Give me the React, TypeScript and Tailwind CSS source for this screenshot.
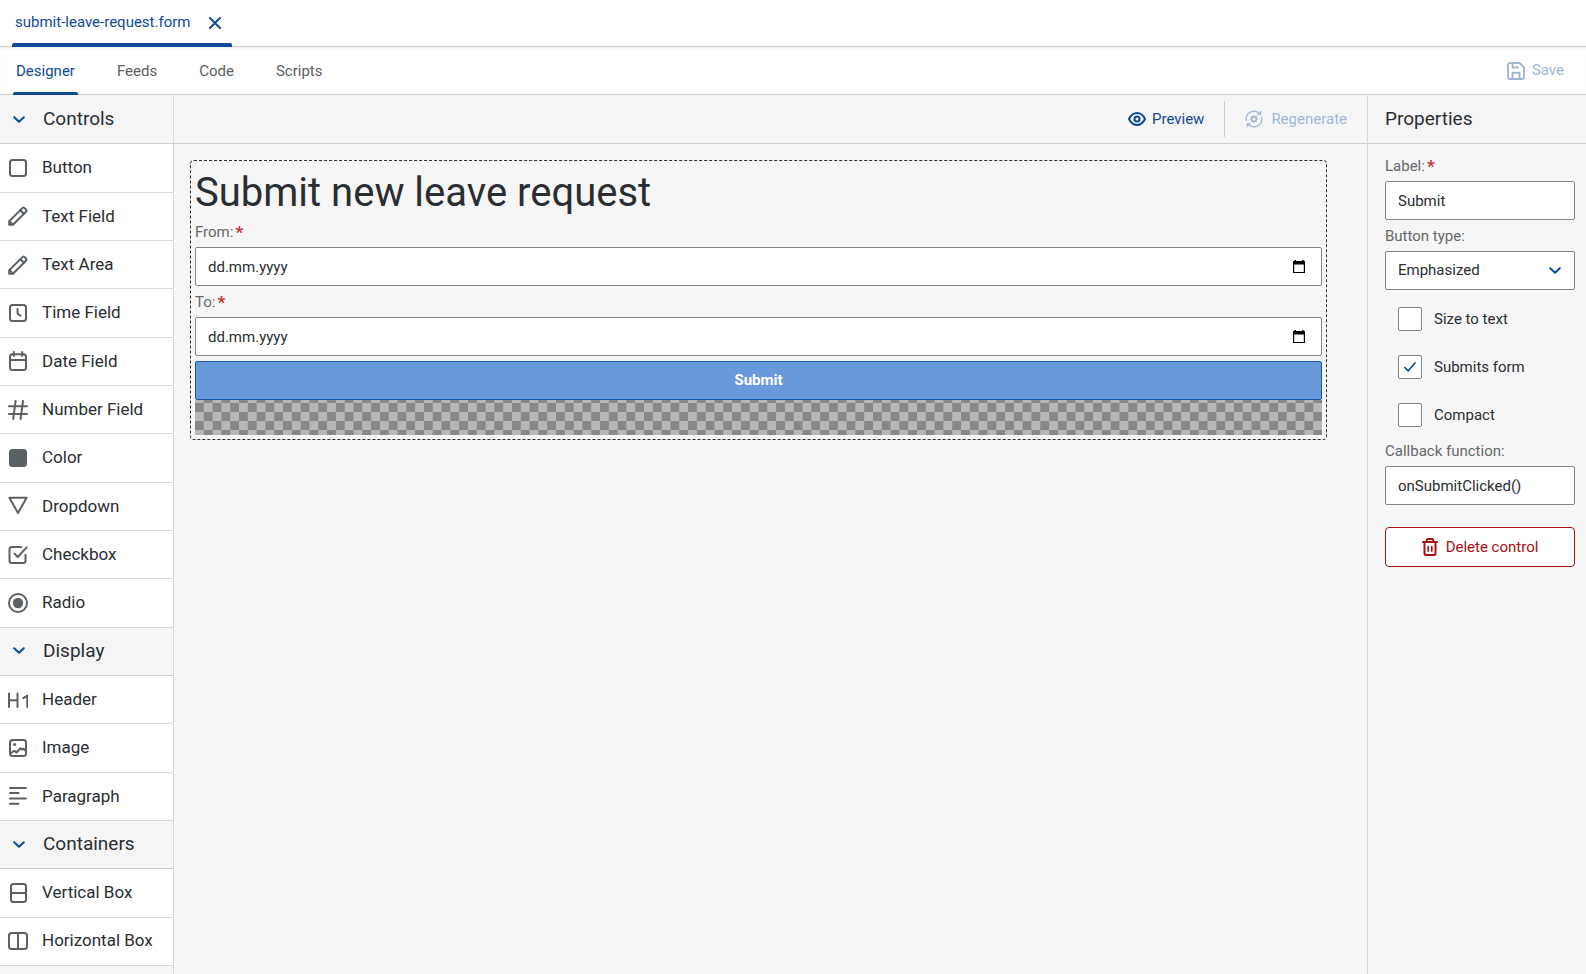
import React, { useState } from "react";

const stroke = {
  fill: "none",
  stroke: "currentColor",
  strokeWidth: 2,
  strokeLinecap: "round",
  strokeLinejoin: "round",
} as const;

function Icon({ children, className = "size-5" }: { children: React.ReactNode; className?: string }) {
  return (
    <svg viewBox="0 0 20 20" className={`shrink-0 ${className}`} aria-hidden="true" {...stroke}>
      {children}
    </svg>
  );
}

function Chevron({ className = "" }: { className?: string }) {
  return (
    <svg viewBox="0 0 12 8" className={`h-2 w-3 shrink-0 ${className}`} aria-hidden="true" {...stroke}>
      <path d="M1.2 1.2 6 5.7l4.8-4.5" />
    </svg>
  );
}

const pencil = (
  <>
    <path d="M1.2 18.8v-3.6L14.6 1.9a1.2 1.2 0 0 1 1.7 0l1.9 1.9a1.2 1.2 0 0 1 0 1.7L4.9 18.8Z" />
    <path d="m12.4 4.2 3.5 3.5M1.8 15.5l2.7 2.7" />
  </>
);

type Entry = { name: string; icon: React.ReactNode };

const sections: { title: string; items: Entry[] }[] = [
  {
    title: "Controls",
    items: [
      { name: "Button", icon: <rect x="2" y="2" width="16" height="16" rx="2.5" /> },
      { name: "Text Field", icon: pencil },
      { name: "Text Area", icon: pencil },
      {
        name: "Time Field",
        icon: (
          <>
            <rect x="2" y="2" width="16" height="16" rx="2.5" />
            <path d="M9.6 6v4.6l2.9 2.2" />
          </>
        ),
      },
      {
        name: "Date Field",
        icon: (
          <>
            <rect x="2" y="3.2" width="16" height="15.8" rx="2.5" />
            <path d="M2.4 9h15.2M5.8 1v4M14.2 1v4" />
          </>
        ),
      },
      { name: "Number Field", icon: <path d="M1 6.2h18M1 14h18M7.6 1 5.2 19M15 1l-2.4 18" /> },
      { name: "Color", icon: <rect x="2" y="2" width="16" height="16" rx="2.5" fill="currentColor" /> },
      { name: "Dropdown", icon: <path d="M1.4 1.8h17.2L10 17Z" /> },
      {
        name: "Checkbox",
        icon: (
          <>
            <path d="M13.2 2H3.8A2.3 2.3 0 0 0 1.5 4.3v11.4A2.3 2.3 0 0 0 3.8 18h11.4a2.3 2.3 0 0 0 2.3-2.3V9.8" />
            <path d="m6.4 8.6 3.3 3.4 9-9.6" />
          </>
        ),
      },
      {
        name: "Radio",
        icon: (
          <>
            <circle cx="10" cy="10" r="9" />
            <circle cx="10" cy="10" r="5.2" fill="currentColor" stroke="none" />
          </>
        ),
      },
    ],
  },
  {
    title: "Display",
    items: [
      {
        name: "Header",
        icon: <path d="M1 3.5V17M9.5 3.5V17M1 10.2h8.5M15.3 8.2l4-2.7V17" />,
      },
      {
        name: "Image",
        icon: (
          <>
            <rect x="2" y="2" width="16" height="16" rx="2.5" />
            <circle cx="6.7" cy="6.5" r="1.5" fill="currentColor" stroke="none" />
            <path d="m2.5 15.5 3.7-2.8 2.3 1.8 1.3-1M8.5 14.5l4-4.3 1.6 1.4 1.4-.8 2.2 2" />
          </>
        ),
      },
      { name: "Paragraph", icon: <path d="M2 2h16M2 7h8.5M2 12.5h16M2 17.7h8.5" /> },
    ],
  },
  {
    title: "Containers",
    items: [
      {
        name: "Vertical Box",
        icon: (
          <>
            <rect x="3" y="1" width="15" height="18" rx="2.5" />
            <path d="M3.5 10h14" />
          </>
        ),
      },
      {
        name: "Horizontal Box",
        icon: (
          <>
            <rect x="1" y="2" width="18" height="16" rx="2.5" />
            <path d="M10 2.5v15" />
          </>
        ),
      },
    ],
  },
];

const views = ["Designer", "Feeds", "Code", "Scripts"];

function Palette() {
  return (
    <aside className="flex w-[174px] shrink-0 flex-col border-r border-[#d9d9d9] bg-[#f5f5f5] pt-px pb-2">
      {sections.map((section) => (
        <React.Fragment key={section.title}>
          <button className="flex min-h-12 flex-1 items-center gap-[18px] border-b border-[#cfcfcf] pl-[13px] text-left text-[19px]">
            <Chevron className="text-[#0f4a96]" />
            {section.title}
          </button>
          {section.items.map((item) => (
            <button
              key={item.name}
              className="flex min-h-12 flex-1 items-center gap-[14px] border-b border-[#d9d9d9] bg-white pl-2 text-left text-[17px]"
            >
              <Icon className="size-5 text-[#5b6064]">{item.icon}</Icon>
              {item.name}
            </button>
          ))}
        </React.Fragment>
      ))}
    </aside>
  );
}

function Label({ htmlFor, required, children }: { htmlFor: string; required?: boolean; children: React.ReactNode }) {
  return (
    <label htmlFor={htmlFor} className="flex h-[30px] items-center gap-0.5 text-[15px] text-[#65686b]">
      {children}
      {required && <span className="text-[17px] leading-4 font-bold text-[#c9302f]">*</span>}
    </label>
  );
}

const field = "mb-px h-[39px] w-full rounded-xs border border-[#7f868d] bg-white px-3 text-[15px] text-[#2a2e33]";

function DateField({ id, label }: { id: string; label: string }) {
  return (
    <div>
      <Label htmlFor={id} required>
        {label}
      </Label>
      <div className="mb-px flex h-[39px] items-center rounded-xs border border-[#7f868d] bg-white pr-4">
        <input
          id={id}
          placeholder="dd.mm.yyyy"
          className="h-full min-w-0 flex-1 px-3 text-[15px] outline-none placeholder:text-[#2a2e33]"
        />
        <button aria-label={`Pick ${label}`} className="text-black">
          <svg viewBox="0 0 12 14" className="h-[14px] w-3" fill="currentColor" aria-hidden="true">
            <path d="M1.5 0H3v1h6V0h1.5v1H12v12H0V1h1.5Zm-.3 4.5V12h9.600V4.500Z" fillRule="evenodd" />
          </svg>
        </button>
      </div>
    </div>
  );
}

function Check({ label, initial = false }: { label: string; initial?: boolean }) {
  const [on, setOn] = useState(initial);
  return (
    <label className="flex h-6 items-center gap-3 pl-[13px] text-[15px]">
      <span className="grid size-6 place-items-center">
        <input
          type="checkbox"
          checked={on}
          onChange={() => setOn(!on)}
          className="col-start-1 row-start-1 size-6 appearance-none rounded-xs border border-[#7f868d] bg-white"
        />
        {on && (
          <svg
            viewBox="0 0 12 10"
            className="pointer-events-none col-start-1 row-start-1 h-[10px] w-3 text-[#0f4a96]"
            aria-hidden="true"
            {...stroke}
          >
            <path d="M1 5.5 4.2 8.8 11 1" strokeWidth="1.7" />
          </svg>
        )}
      </span>
      {label}
    </label>
  );
}

function Properties() {
  return (
    <aside className="flex w-[219px] shrink-0 flex-col border-l border-[#d9d9d9]">
      <h2 className="flex h-[49px] items-center border-b border-[#cfcfcf] bg-[#f5f5f5] px-[17px] text-[19px]">
        Properties
      </h2>
      <div className="flex flex-col pt-[7px] pr-[11px] pl-[17px]">
        <Label htmlFor="label" required>
          Label:
        </Label>
        <input id="label" defaultValue="Submit" className={field} />
        <Label htmlFor="type">Button type:</Label>
        <div className="grid items-center">
          <select id="type" className={`${field} col-start-1 row-start-1 appearance-none`}>
            <option>Emphasized</option>
          </select>
          <Chevron className="pointer-events-none col-start-1 row-start-1 mr-[14px] justify-self-end text-[#0f4a96]" />
        </div>
        <div className="flex flex-col gap-6 pt-4 pb-[9px]">
          <Check label="Size to text" />
          <Check label="Submits form" initial />
          <Check label="Compact" />
        </div>
        <Label htmlFor="callback">Callback function:</Label>
        <input id="callback" defaultValue="onSubmitClicked()" className={field} />
        <button className="mt-[21px] flex h-10 items-center justify-center gap-2 rounded-sm border border-[#aa0f12] bg-white text-[15px] text-[#aa0f12]">
          <svg viewBox="0 0 16 18" className="h-[18px] w-4" aria-hidden="true" {...stroke}>
            <path d="M1 4h14M4.8 3.8V2.2A1.2 1.2 0 0 1 6 1h4a1.2 1.2 0 0 1 1.2 1.2v1.6M2.5 4.5v10.7A1.8 1.8 0 0 0 4.3 17h7.4a1.8 1.8 0 0 0 1.8-1.8V4.5" />
            <path d="M6.2 8.5V13M9.8 8.5V13" strokeWidth="1.7" />
          </svg>
          Delete control
        </button>
      </div>
    </aside>
  );
}

export default function App() {
  return (
    <div className="flex min-h-screen flex-col bg-[#f6f6f6] font-[Roboto,sans-serif] text-[#2a2e33]">
      <header className="flex h-[47px] border-b border-[#cfcfcf] bg-white px-3">
        <div className="-mb-px flex flex-col text-[15px] text-[#0f4a96]">
          <div className="flex flex-1 items-center gap-[19px] pt-0.5 pr-[11px] pl-[3px]">
            <a href="#form">submit-leave-request.form</a>
            <button aria-label="Close tab">
              <svg viewBox="0 0 12 12" className="size-3" aria-hidden="true" {...stroke}>
                <path d="m1 1 10 10M11 1 1 11" />
              </svg>
            </button>
          </div>
          <div className="h-1 rounded-t-xs bg-[#0f4a96]" />
        </div>
      </header>

      <div className="flex h-12 justify-between border-b border-[#cfcfcf] bg-white pr-[22px] pl-[13px] shadow-[inset_0_2px_2px_-1px_#e8e8e8]">
        <nav className="-mb-px flex gap-9 text-[15px]">
          {views.map((view, i) => (
            <a
              key={view}
              href={`#${view.toLowerCase()}`}
              className={`flex flex-col ${i === 0 ? "text-[#0f4a96]" : "text-[#5b6064]"}`}
            >
              <span className="flex flex-1 items-center px-[3px] pt-[3px]">{view}</span>
              <span className={`h-[3px] rounded-t-xs ${i === 0 ? "bg-[#0f4a96]" : "bg-transparent"}`} />
            </a>
          ))}
        </nav>
        <button disabled className="flex items-center gap-1.5 text-[15px] text-[#a0b6d6]">
          <Icon className="size-5">
            <path
              d="M4 2h9.5L18 6.5V16a2 2 0 0 1-2 2H4a2 2 0 0 1-2-2V4a2 2 0 0 1 2-2ZM6.5 2.3v4.2H12M6.5 17.500v-5.700h7v5.700"
              strokeWidth="1.9"
            />
          </Icon>
          Save
        </button>
      </div>

      <div className="flex flex-1">
        <Palette />
        <main className="min-w-0 flex-1">
          <div className="flex h-[49px] items-center justify-end border-b border-[#cfcfcf] bg-[#f5f5f5] pr-5 text-[15px]">
            <button className="flex items-center gap-1.5 pr-5 text-[#0f4a96]">
              <svg viewBox="0 0 18 14" className="h-[14px] w-[18px]" aria-hidden="true" {...stroke}>
                <path d="M1 7c1.8-3.8 4.6-6 8-6s6.200 2.200 8 6c-1.800 3.800-4.600 6-8 6s-6.200-2.200-8-6Z" />
                <circle cx="9" cy="7" r="2.5" />
              </svg>
              Preview
            </button>
            <span className="h-9 w-px bg-[#cfcfcf]" />
            <button disabled className="flex items-center gap-2 pl-5 text-[#a0b6d6]">
              <svg viewBox="0 0 18 18" className="size-[18px]" aria-hidden="true" {...stroke} strokeWidth="1.3">
                <path d="M1.3 10.500A7.800 7.800 0 0 1 14.200 3.300M16.700 7.500A7.800 7.800 0 0 1 3.800 14.700" />
                <path d="M16 1.200v3.300h-3.300ZM2 16.800v-3.300h3.300Z" fill="currentColor" strokeWidth="0.6" />
                <circle cx="9" cy="9" r="2.300" strokeWidth="1.5" />
                <path
                  d="M9 5.300v1M9 11.700v1M5.300 9h1M11.700 9h1M6.500 6.500l.6.6M10.900 10.900l.6.6M6.500 11.500l.6-.6M10.900 7.100l.6-.6"
                  strokeWidth="1.1"
                />
              </svg>
              Regenerate
            </button>
          </div>
          <section className="mt-4 mr-10 ml-4 rounded-sm border border-dashed border-[#2a2e33] p-1">
            <h1 className="h-[52px] text-[40px] leading-[56px]">Submit new leave request</h1>
            <DateField id="from" label="From:" />
            <DateField id="to" label="To:" />
            <button className="mt-1 h-[39px] w-full rounded-xs border border-[#1559a8] bg-[#6899da] text-[15px] font-bold text-white">
              Submit
            </button>
            <div className="h-[35px] bg-[repeating-conic-gradient(#b7b7b7_0_25%,#888888_0_50%)] bg-[length:1.5625%_18px] bg-[position:0_3px]" />
          </section>
        </main>
        <Properties />
      </div>
    </div>
  );
}
